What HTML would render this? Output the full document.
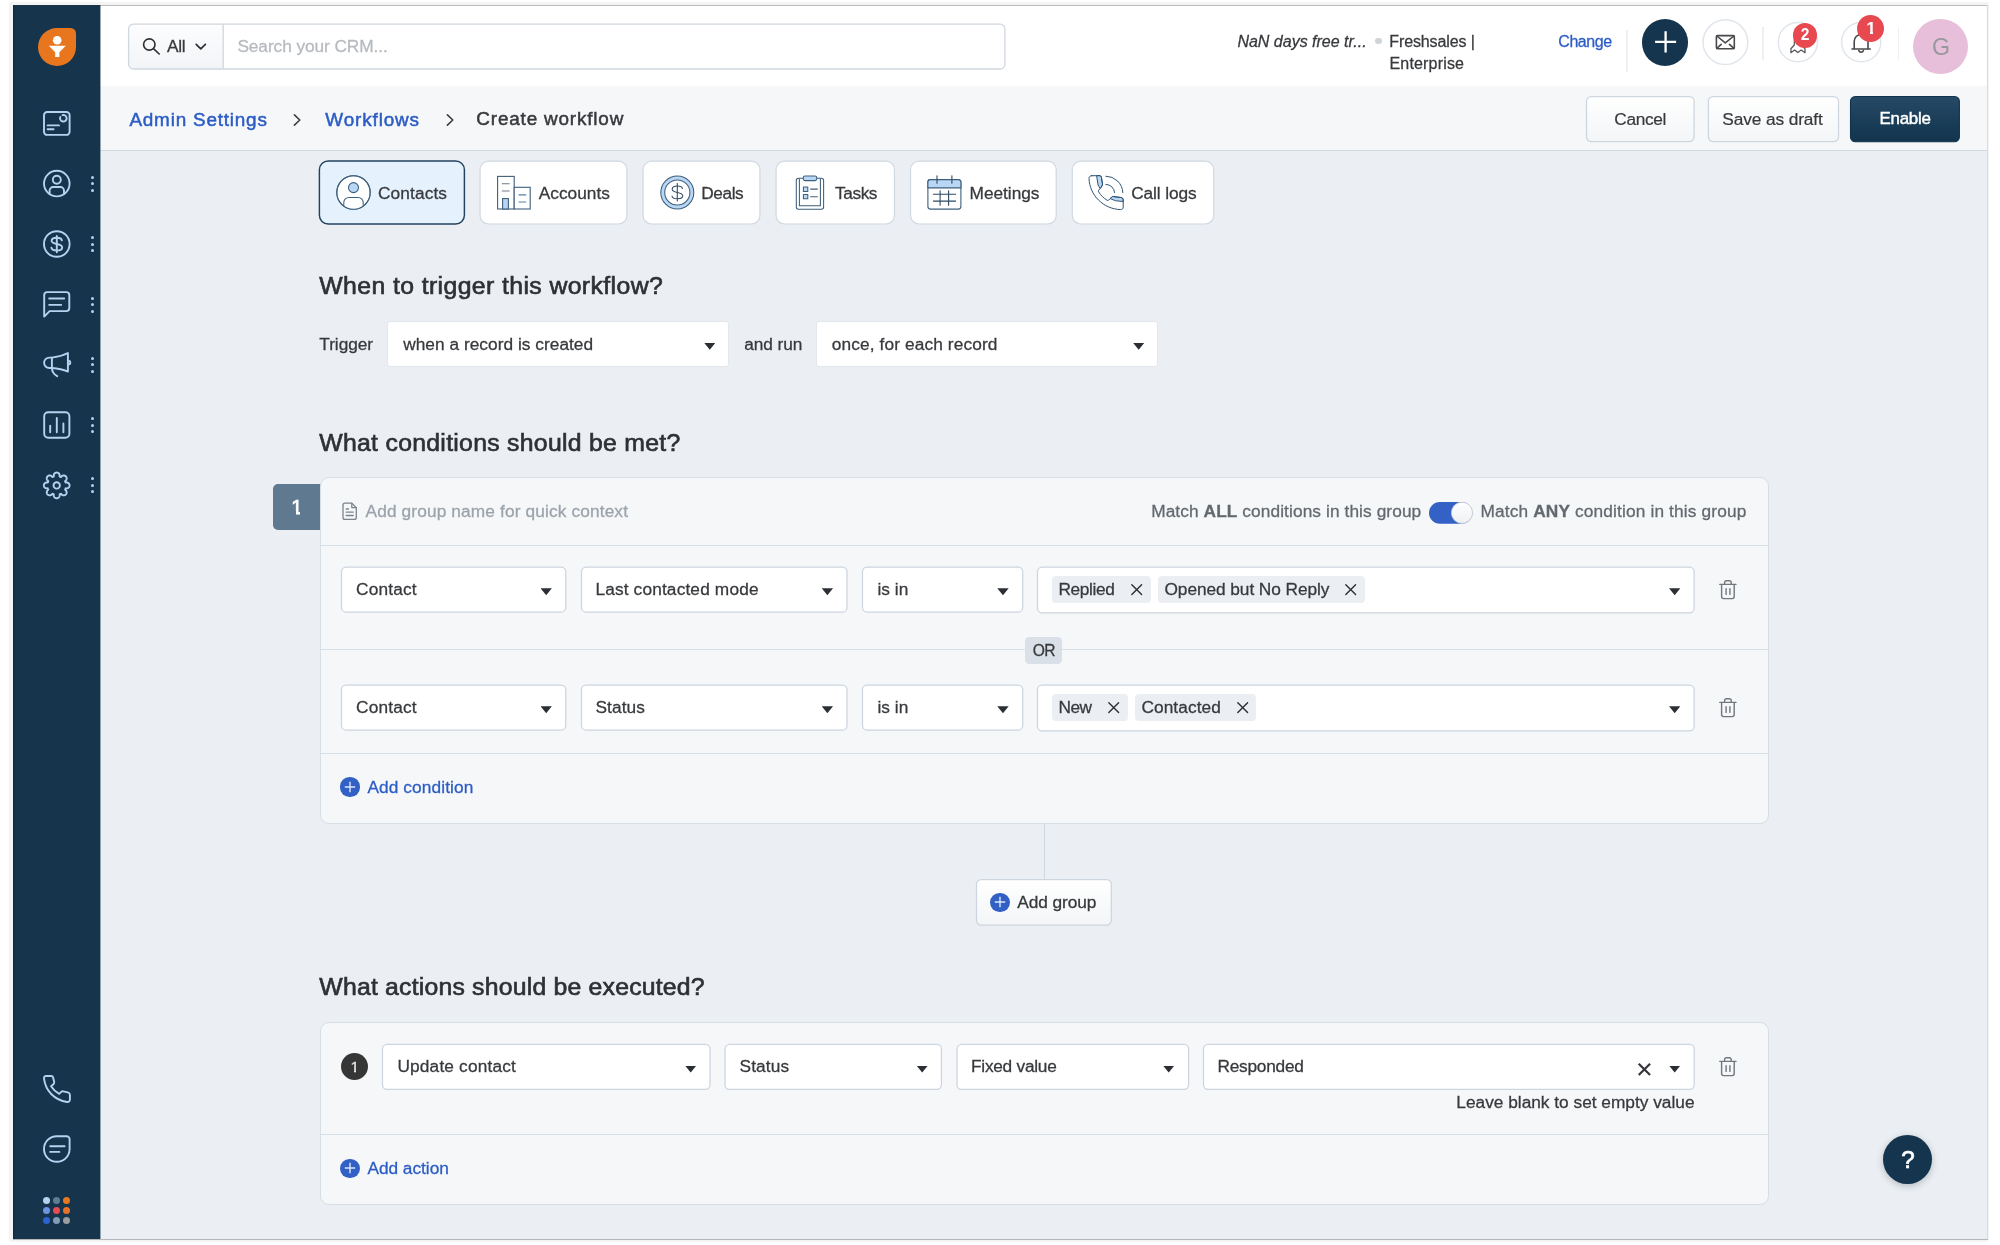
<!DOCTYPE html>
<html lang="en">
<head>
<meta charset="utf-8">
<title>Create workflow</title>
<style>
*{box-sizing:border-box;margin:0;padding:0}
html,body{width:2000px;height:1245px;background:#fff;overflow:hidden}
body{position:relative;font-family:"Liberation Sans",sans-serif;font-size:17.3px;color:#37393c;line-height:1}
.a{position:absolute}
.t{position:absolute;white-space:nowrap;line-height:20px;height:20px;margin-top:-0.7px;-webkit-text-stroke:0.28px currentColor}
.m{-webkit-text-stroke:0.5px currentColor}
#frame{left:13px;top:5px;width:1974.2px;height:1234px;background:#ebeff3;overflow:hidden}
#halo{left:9px;top:2px;width:1980.4px;height:1240.4px;background:#f4f4f4;border-radius:3px;box-shadow:0 0 1px 0 #f6f6f6}
#side{left:13px;top:5px;width:87px;height:1234px;background:#16344c;box-shadow:inset 1.3px 0 0 #0d2b45}
#top{left:100px;top:5px;width:1887px;height:81.3px;background:#fff;border-top:1px solid #bcbcbc}
#sub{left:100px;top:86.3px;width:1887px;height:64.7px;background:#f5f7f9;border-bottom:1px solid #d1d9e1}
.blue{color:#2c5cc5}
.sel{position:absolute;background:#fff;border:1px solid #d3dae2;border-radius:5px;height:46px;box-shadow:0 0 0 .5px rgba(203,212,222,.5),inset 0 0 0 .5px rgba(203,212,222,.4)}
.sel0{position:absolute;background:#fff;border:0.9px solid #e2e7ec;border-radius:3px;height:45.8px;margin:-0.65px 0 0 -0.9px}
.car{position:absolute;width:11.4px;height:7px;background:#2b2f33;clip-path:polygon(0 0,100% 0,50% 100%)}
.card{position:absolute;background:#f5f7f9;border:1px solid #d6dee6;border-radius:9px}
.hr{position:absolute;height:1.2px;background:#d6dee6}
.tag{position:absolute;background:#ebeff3;border-radius:4px;height:26.6px}
.btn{position:absolute;border:1px solid #d1d9e1;box-shadow:0 0 0 .5px rgba(203,212,222,.55);border-radius:5px;background:linear-gradient(#fff,#f3f5f7)}
.tab{position:absolute;top:160.5px;height:64px;background:#fff;border:1px solid #dde3ea;border-radius:9px;box-shadow:0 0 0 .5px rgba(215,222,230,.6)}
.circ{position:absolute;border-radius:50%}
svg{position:absolute;overflow:visible}
</style>
</head>
<body>
<div id="w" style="position:absolute;left:0;top:0;width:2000px;height:1245px;will-change:transform">
<svg width="0" height="0" style="left:0;top:0"><defs><linearGradient id="gw" x1="0" y1="0" x2="0" y2="1"><stop offset="0" stop-color="#fff"/><stop offset="1" stop-color="#f3f5f7"/></linearGradient><linearGradient id="gd" x1="0" y1="0" x2="0" y2="1"><stop offset="0" stop-color="#264966"/><stop offset="1" stop-color="#12344d"/></linearGradient></defs></svg>
<div class="a" id="halo"></div>
<div class="a" id="frame"></div>
<div class="a" id="side"></div>
<div class="a" id="top"></div>
<div class="a" id="sub"></div>
<div class="a" style="left:100px;top:5px;width:1px;height:1234px;background:rgba(22,52,76,.42)"></div>
<div class="a" style="left:1987px;top:5px;width:1px;height:1234px;background:#dadbdd"></div>
<div class="a" style="left:12.8px;top:1239px;width:1975.2px;height:1px;background:#b5b6b9"></div>

<!--SIDEBAR-->
<svg style="left:38px;top:28px" width="38" height="38" viewBox="0 0 38 38"><path d="M19 0H32.5A5.5 5.5 0 0 1 38 5.5V19A19 19 0 1 1 19 0Z" fill="#e8761f"/><circle cx="19.2" cy="12.2" r="4.3" fill="#fff"/><path d="M10.8 17.8H27.8L21.4 24.2V29H17.2V24.2Z" fill="#fff"/></svg>
<svg style="left:42px;top:110px" width="30" height="28" viewBox="42 110 30 28" fill="none" stroke="#b7d2f1" stroke-width="1.9" stroke-linecap="round" stroke-linejoin="round"><rect x="44" y="112" width="25.6" height="22.9" rx="3.2"/><path d="M47.6 125.4H59M47.6 129.3H53.6"/><path d="M60.3 117A3.3 3.3 0 1 0 62.4 115.1"/></svg>
<svg style="left:42px;top:169px" width="30" height="30" viewBox="42 169 30 30" fill="none" stroke="#b7d2f1" stroke-width="1.9" stroke-linecap="round" stroke-linejoin="round"><circle cx="56.8" cy="183.6" r="12.8"/><circle cx="56.8" cy="179.8" r="4"/><path d="M49.6 194V190.6A3.6 3.6 0 0 1 53.2 187H60.4A3.6 3.6 0 0 1 64 190.6V194"/></svg>
<div class="a" style="left:90.8px;top:175.8px;width:3px;height:3px;border-radius:50%;background:#b7d2f1"></div><div class="a" style="left:90.8px;top:182.3px;width:3px;height:3px;border-radius:50%;background:#b7d2f1"></div><div class="a" style="left:90.8px;top:188.8px;width:3px;height:3px;border-radius:50%;background:#b7d2f1"></div><svg style="left:42px;top:229px" width="30" height="30" viewBox="42 229 30 30" fill="none" stroke="#b7d2f1" stroke-width="1.9" stroke-linecap="round" stroke-linejoin="round"><circle cx="56.8" cy="244" r="12.8"/><path d="M56.8 236V252.2"/><path d="M61.8 240.4C61.8 238.6 59.6 237.8 56.8 237.8C53.8 237.8 51.6 238.8 51.6 240.8C51.6 245.2 62.2 242.8 62.2 247.4C62.2 249.4 59.8 250.4 56.8 250.4C53.8 250.4 51.6 249.4 51.4 247.6"/></svg>
<div class="a" style="left:90.8px;top:236.1px;width:3px;height:3px;border-radius:50%;background:#b7d2f1"></div><div class="a" style="left:90.8px;top:242.6px;width:3px;height:3px;border-radius:50%;background:#b7d2f1"></div><div class="a" style="left:90.8px;top:249.1px;width:3px;height:3px;border-radius:50%;background:#b7d2f1"></div><svg style="left:42px;top:289px" width="30" height="31" viewBox="42 289 30 31" fill="none" stroke="#b7d2f1" stroke-width="1.9" stroke-linecap="round" stroke-linejoin="round"><path d="M47.2 292.1H66.3A3 3 0 0 1 69.3 295.1V308.1A3 3 0 0 1 66.3 311.1H49.6L44.2 316.6V295.1A3 3 0 0 1 47.2 292.1Z"/><path d="M49.2 298.5H64.2M49.2 304.9H61.2"/></svg>
<div class="a" style="left:90.8px;top:296.5px;width:3px;height:3px;border-radius:50%;background:#b7d2f1"></div><div class="a" style="left:90.8px;top:303.0px;width:3px;height:3px;border-radius:50%;background:#b7d2f1"></div><div class="a" style="left:90.8px;top:309.5px;width:3px;height:3px;border-radius:50%;background:#b7d2f1"></div><svg style="left:42px;top:350px" width="31" height="29" viewBox="42 350 31 29" fill="none" stroke="#b7d2f1" stroke-width="1.9" stroke-linecap="round" stroke-linejoin="round"><path d="M51.9 357.6H49.3A5.2 5.2 0 0 0 49.3 368H51.9Z"/><path d="M51.9 357.6C58 357 63 355.6 67.9 353V371.6C63 369.4 58 368.4 51.9 368"/><path d="M68.4 360.6A1.9 1.9 0 0 1 68.4 364.4"/><path d="M51.9 368C52 372 54 374.4 57.2 376.2"/></svg>
<div class="a" style="left:90.8px;top:356.8px;width:3px;height:3px;border-radius:50%;background:#b7d2f1"></div><div class="a" style="left:90.8px;top:363.3px;width:3px;height:3px;border-radius:50%;background:#b7d2f1"></div><div class="a" style="left:90.8px;top:369.8px;width:3px;height:3px;border-radius:50%;background:#b7d2f1"></div><svg style="left:42px;top:410px" width="30" height="30" viewBox="42 410 30 30" fill="none" stroke="#b7d2f1" stroke-width="1.9" stroke-linecap="round" stroke-linejoin="round"><rect x="44.2" y="412.3" width="25.2" height="25.4" rx="4"/><path d="M50.2 425.6V432.2M56.8 418V432.2M63.4 423.4V432.2"/></svg>
<div class="a" style="left:90.8px;top:417.1px;width:3px;height:3px;border-radius:50%;background:#b7d2f1"></div><div class="a" style="left:90.8px;top:423.6px;width:3px;height:3px;border-radius:50%;background:#b7d2f1"></div><div class="a" style="left:90.8px;top:430.1px;width:3px;height:3px;border-radius:50%;background:#b7d2f1"></div><svg style="left:42px;top:471px" width="30" height="30" viewBox="-15 -15 30 30" fill="none" stroke="#b7d2f1" stroke-width="1.9" stroke-linejoin="round"><g transform="translate(-0.3,-0.6)"><path d="M12.85 0.00 L12.84 0.22 L12.82 0.45 L12.77 0.67 L12.71 0.89 L12.64 1.11 L12.54 1.32 L12.42 1.53 L12.29 1.73 L12.14 1.92 L11.96 2.11 L11.76 2.29 L11.54 2.45 L11.28 2.61 L10.99 2.74 L10.65 2.85 L10.23 2.93 L9.60 2.93 L8.89 2.89 L8.84 3.04 L8.79 3.20 L8.73 3.35 L8.67 3.50 L8.61 3.65 L8.54 3.80 L8.47 3.95 L8.40 4.10 L8.33 4.24 L8.86 4.71 L9.30 5.16 L9.55 5.51 L9.71 5.83 L9.82 6.14 L9.89 6.43 L9.94 6.70 L9.95 6.97 L9.94 7.22 L9.91 7.47 L9.86 7.71 L9.80 7.93 L9.72 8.15 L9.62 8.36 L9.51 8.56 L9.38 8.75 L9.24 8.92 L9.09 9.09 L8.92 9.24 L8.75 9.38 L8.56 9.51 L8.36 9.62 L8.15 9.72 L7.93 9.80 L7.71 9.86 L7.47 9.91 L7.22 9.94 L6.97 9.95 L6.70 9.94 L6.43 9.89 L6.14 9.82 L5.83 9.71 L5.51 9.55 L5.16 9.30 L4.71 8.86 L4.24 8.33 L4.10 8.40 L3.95 8.47 L3.80 8.54 L3.65 8.61 L3.50 8.67 L3.35 8.73 L3.20 8.79 L3.04 8.84 L2.89 8.89 L2.93 9.60 L2.93 10.23 L2.85 10.65 L2.74 10.99 L2.61 11.28 L2.45 11.54 L2.29 11.76 L2.11 11.96 L1.92 12.14 L1.73 12.29 L1.53 12.42 L1.32 12.54 L1.11 12.64 L0.89 12.71 L0.67 12.77 L0.45 12.82 L0.22 12.84 L0.00 12.85 L-0.22 12.84 L-0.45 12.82 L-0.67 12.77 L-0.89 12.71 L-1.11 12.64 L-1.32 12.54 L-1.53 12.42 L-1.73 12.29 L-1.92 12.14 L-2.11 11.96 L-2.29 11.76 L-2.45 11.54 L-2.61 11.28 L-2.74 10.99 L-2.85 10.65 L-2.93 10.23 L-2.93 9.60 L-2.89 8.89 L-3.04 8.84 L-3.20 8.79 L-3.35 8.73 L-3.50 8.67 L-3.65 8.61 L-3.80 8.54 L-3.95 8.47 L-4.10 8.40 L-4.24 8.33 L-4.71 8.86 L-5.16 9.30 L-5.51 9.55 L-5.83 9.71 L-6.14 9.82 L-6.43 9.89 L-6.70 9.94 L-6.97 9.95 L-7.22 9.94 L-7.47 9.91 L-7.71 9.86 L-7.93 9.80 L-8.15 9.72 L-8.36 9.62 L-8.56 9.51 L-8.75 9.38 L-8.92 9.24 L-9.09 9.09 L-9.24 8.92 L-9.38 8.75 L-9.51 8.56 L-9.62 8.36 L-9.72 8.15 L-9.80 7.93 L-9.86 7.71 L-9.91 7.47 L-9.94 7.22 L-9.95 6.97 L-9.94 6.70 L-9.89 6.43 L-9.82 6.14 L-9.71 5.83 L-9.55 5.51 L-9.30 5.16 L-8.86 4.71 L-8.33 4.24 L-8.40 4.10 L-8.47 3.95 L-8.54 3.80 L-8.61 3.65 L-8.67 3.50 L-8.73 3.35 L-8.79 3.20 L-8.84 3.04 L-8.89 2.89 L-9.60 2.93 L-10.23 2.93 L-10.65 2.85 L-10.99 2.74 L-11.28 2.61 L-11.54 2.45 L-11.76 2.29 L-11.96 2.11 L-12.14 1.92 L-12.29 1.73 L-12.42 1.53 L-12.54 1.32 L-12.64 1.11 L-12.71 0.89 L-12.77 0.67 L-12.82 0.45 L-12.84 0.22 L-12.85 0.00 L-12.84 -0.22 L-12.82 -0.45 L-12.77 -0.67 L-12.71 -0.89 L-12.64 -1.11 L-12.54 -1.32 L-12.42 -1.53 L-12.29 -1.73 L-12.14 -1.92 L-11.96 -2.11 L-11.76 -2.29 L-11.54 -2.45 L-11.28 -2.61 L-10.99 -2.74 L-10.65 -2.85 L-10.23 -2.93 L-9.60 -2.93 L-8.89 -2.89 L-8.84 -3.04 L-8.79 -3.20 L-8.73 -3.35 L-8.67 -3.50 L-8.61 -3.65 L-8.54 -3.80 L-8.47 -3.95 L-8.40 -4.10 L-8.33 -4.24 L-8.86 -4.71 L-9.30 -5.16 L-9.55 -5.51 L-9.71 -5.83 L-9.82 -6.14 L-9.89 -6.43 L-9.94 -6.70 L-9.95 -6.97 L-9.94 -7.22 L-9.91 -7.47 L-9.86 -7.71 L-9.80 -7.93 L-9.72 -8.15 L-9.62 -8.36 L-9.51 -8.56 L-9.38 -8.75 L-9.24 -8.92 L-9.09 -9.09 L-8.92 -9.24 L-8.75 -9.38 L-8.56 -9.51 L-8.36 -9.62 L-8.15 -9.72 L-7.93 -9.80 L-7.71 -9.86 L-7.47 -9.91 L-7.22 -9.94 L-6.97 -9.95 L-6.70 -9.94 L-6.43 -9.89 L-6.14 -9.82 L-5.83 -9.71 L-5.51 -9.55 L-5.16 -9.30 L-4.71 -8.86 L-4.24 -8.33 L-4.10 -8.40 L-3.95 -8.47 L-3.80 -8.54 L-3.65 -8.61 L-3.50 -8.67 L-3.35 -8.73 L-3.20 -8.79 L-3.04 -8.84 L-2.89 -8.89 L-2.93 -9.60 L-2.93 -10.23 L-2.85 -10.65 L-2.74 -10.99 L-2.61 -11.28 L-2.45 -11.54 L-2.29 -11.76 L-2.11 -11.96 L-1.92 -12.14 L-1.73 -12.29 L-1.53 -12.42 L-1.32 -12.54 L-1.11 -12.64 L-0.89 -12.71 L-0.67 -12.77 L-0.45 -12.82 L-0.22 -12.84 L-0.00 -12.85 L0.22 -12.84 L0.45 -12.82 L0.67 -12.77 L0.89 -12.71 L1.11 -12.64 L1.32 -12.54 L1.53 -12.42 L1.73 -12.29 L1.92 -12.14 L2.11 -11.96 L2.29 -11.76 L2.45 -11.54 L2.61 -11.28 L2.74 -10.99 L2.85 -10.65 L2.93 -10.23 L2.93 -9.60 L2.89 -8.89 L3.04 -8.84 L3.20 -8.79 L3.35 -8.73 L3.50 -8.67 L3.65 -8.61 L3.80 -8.54 L3.95 -8.47 L4.10 -8.40 L4.24 -8.33 L4.71 -8.86 L5.16 -9.30 L5.51 -9.55 L5.83 -9.71 L6.14 -9.82 L6.43 -9.89 L6.70 -9.94 L6.97 -9.95 L7.22 -9.94 L7.47 -9.91 L7.71 -9.86 L7.93 -9.80 L8.15 -9.72 L8.36 -9.62 L8.56 -9.51 L8.75 -9.38 L8.92 -9.24 L9.09 -9.09 L9.24 -8.92 L9.38 -8.75 L9.51 -8.56 L9.62 -8.36 L9.72 -8.15 L9.80 -7.93 L9.86 -7.71 L9.91 -7.47 L9.94 -7.22 L9.95 -6.97 L9.94 -6.70 L9.89 -6.43 L9.82 -6.14 L9.71 -5.83 L9.55 -5.51 L9.30 -5.16 L8.86 -4.71 L8.33 -4.24 L8.40 -4.10 L8.47 -3.95 L8.54 -3.80 L8.61 -3.65 L8.67 -3.50 L8.73 -3.35 L8.79 -3.20 L8.84 -3.04 L8.89 -2.89 L9.60 -2.93 L10.23 -2.93 L10.65 -2.85 L10.99 -2.74 L11.28 -2.61 L11.54 -2.45 L11.76 -2.29 L11.96 -2.11 L12.14 -1.92 L12.29 -1.73 L12.42 -1.53 L12.54 -1.32 L12.64 -1.11 L12.71 -0.89 L12.77 -0.67 L12.82 -0.45 L12.84 -0.22Z"/><circle r="3.2"/></g></svg>
<div class="a" style="left:90.8px;top:477.4px;width:3px;height:3px;border-radius:50%;background:#b7d2f1"></div><div class="a" style="left:90.8px;top:483.9px;width:3px;height:3px;border-radius:50%;background:#b7d2f1"></div><div class="a" style="left:90.8px;top:490.4px;width:3px;height:3px;border-radius:50%;background:#b7d2f1"></div><svg style="left:43.1px;top:1074.9px" width="28" height="28" viewBox="0 0 28 28" fill="none" stroke="#b7d2f1" stroke-width="1.9" stroke-linecap="round" stroke-linejoin="round"><path d="M3.2 1H8.2C9.4 1 9.9 1.6 10.1 2.6L11.2 7C11.4 8 11.1 8.6 10.4 9.2L8.1 11.2C10.2 14.6 12.8 17 16.2 18.9L18.2 16.9C18.8 16.3 19.4 16.1 20.2 16.3L24.8 17.4C26.2 17.8 26.9 18.4 26.9 19.8V24.6C26.9 26.2 25.6 27.3 24 27C11.6 25.2 2.6 16 1 3.6C0.8 2 1.8 1 3.2 1Z"/></svg>
<svg style="left:42px;top:1134px" width="30" height="30" viewBox="42 1134 30 30" fill="none" stroke="#b7d2f1" stroke-width="1.9" stroke-linecap="round" stroke-linejoin="round"><path d="M56.8 1136.2H66.6A3 3 0 0 1 69.6 1139.2V1149A12.8 12.8 0 1 1 56.8 1136.2Z"/><path d="M50.2 1146.2H64.6M50.2 1151.9H59.4"/></svg>
<div class="a" style="left:43.0px;top:1197.0px;width:7.2px;height:7.2px;border-radius:50%;background:#b7d2f1"></div><div class="a" style="left:53.1px;top:1197.0px;width:7.2px;height:7.2px;border-radius:50%;background:#5f7d93"></div><div class="a" style="left:63.1px;top:1197.0px;width:7.2px;height:7.2px;border-radius:50%;background:#e8781f"></div><div class="a" style="left:43.0px;top:1207.2px;width:7.2px;height:7.2px;border-radius:50%;background:#6f93e0"></div><div class="a" style="left:53.1px;top:1207.2px;width:7.2px;height:7.2px;border-radius:50%;background:#e84c50"></div><div class="a" style="left:63.1px;top:1207.2px;width:7.2px;height:7.2px;border-radius:50%;background:#ea7226"></div><div class="a" style="left:43.0px;top:1217.3px;width:7.2px;height:7.2px;border-radius:50%;background:#2e62d1"></div><div class="a" style="left:53.1px;top:1217.3px;width:7.2px;height:7.2px;border-radius:50%;background:#7f9cb9"></div><div class="a" style="left:63.1px;top:1217.3px;width:7.2px;height:7.2px;border-radius:50%;background:#9b9c9e"></div>
<!--TOPBAR-->
<svg style="left:125px;top:21px" width="884" height="52" viewBox="125 21 884 52"><defs><linearGradient id="gs" x1="0" y1="0" x2="0" y2="1"><stop offset="0" stop-color="#fdfdfe"/><stop offset="1" stop-color="#f2f4f7"/></linearGradient></defs><rect x="128.6" y="24.15" width="876.3" height="44.85" rx="4.8" fill="#fff"/><path d="M223.2 24.15H133.4A4.8 4.8 0 0 0 128.6 28.95V64.2A4.8 4.8 0 0 0 133.4 69H223.2Z" fill="url(#gs)"/><path d="M223.2 24.15V69" stroke="#cfd7df" stroke-width="1.3"/><rect x="128.6" y="24.15" width="876.3" height="44.85" rx="4.8" fill="none" stroke="#cfd7df" stroke-width="1.3"/></svg>
<svg style="left:141px;top:36px" width="22" height="21" viewBox="141 36 22 21" fill="none" stroke="#2f3235" stroke-width="1.65" stroke-linecap="round"><circle cx="149.3" cy="44.5" r="5.7"/><path d="M153.5 48.7L159.2 54"/></svg>
<span class="t" style="left:167px;top:36.5px;letter-spacing:-0.3px">All</span>
<svg style="left:194px;top:42px" width="14" height="10" viewBox="194 42 14 10" fill="none" stroke="#2b2f33" stroke-width="1.7" stroke-linecap="round" stroke-linejoin="round"><path d="M196.2 44.4L200.8 48.8L205.4 44.4"/></svg>
<span class="t" style="left:237.4px;top:36.5px;letter-spacing:-0.08px;color:#b6babf">Search your CRM...</span>

<span class="t" style="left:1237.4px;top:32.2px;font-size:16px;font-style:italic;letter-spacing:0.0px">NaN days free tr...</span>
<div class="circ" style="left:1375.4px;top:38px;width:6.4px;height:6.4px;background:#cfd4d9"></div>
<span class="t" style="left:1389.3px;top:32.2px;font-size:16px;letter-spacing:-0.12px">Freshsales |</span>
<span class="t" style="left:1389.5px;top:54.2px;font-size:16px;letter-spacing:0.17px">Enterprise</span>
<span class="t blue" style="left:1558.3px;top:32.2px;font-size:16px;letter-spacing:-0.45px">Change</span>
<div class="a" style="left:1626.3px;top:30px;width:1.6px;height:42.4px;background:#eceff3"></div>
<div class="circ" style="left:1641.6px;top:19.1px;width:46.6px;height:46.6px;background:#15354e"></div>
<svg style="left:1652px;top:30px" width="26" height="26" viewBox="1652 30 26 26" stroke="#fff" stroke-width="2.3" stroke-linecap="butt"><path d="M1655.1 41.9H1676.1M1665.6 31.3V52.4"/></svg>
<svg style="left:1700px;top:17px" width="51" height="51" viewBox="1700 17 51 51"><circle cx="1725.40" cy="42.20" r="22.40" fill="#fff" stroke="#e0e6ec" stroke-width="1.5"/></svg>
<svg style="left:1714px;top:33px" width="23" height="18" viewBox="1714 33 23 18" fill="none" stroke="#47494c" stroke-width="1.6" stroke-linejoin="round" stroke-linecap="round"><rect x="1716.4" y="35.6" width="17.9" height="13.2" rx="1.2"/><path d="M1716.8 36L1725.3 42.9L1733.9 36M1716.8 48.4L1721.2 44.4M1733.9 48.4L1729.5 44.4"/></svg>
<div class="a" style="left:1762.2px;top:27.4px;width:1.6px;height:33px;background:#eceff3"></div>
<svg style="left:1775px;top:20px" width="46" height="46" viewBox="1775 20 46 46"><circle cx="1797.90" cy="42.20" r="19.60" fill="#fff" stroke="#e0e6ec" stroke-width="1.5"/></svg>
<svg style="left:1788px;top:30px" width="22" height="25" viewBox="1788 30 22 25" fill="none" stroke="#5a5c5f" stroke-width="1.3" stroke-linejoin="round" stroke-linecap="round"><path d="M1798 31C1794.5 34.5 1794 40 1794.3 45L1790.9 48.8V52.7L1794.6 49.9L1797.9 52.6L1801.2 49.9L1805 52.7V48.8L1801.6 45C1801.9 40 1801.4 34.5 1798 31Z"/></svg>
<div class="circ" style="left:1792.8px;top:23.2px;width:24.6px;height:24.6px;background:#e8484f"></div>
<span class="t" style="left:1792.7px;top:25.9px;width:24.6px;text-align:center;color:#fff;font-weight:700;font-size:15.6px;-webkit-text-stroke:0">2</span>
<svg style="left:1839px;top:20px" width="46" height="46" viewBox="1839 20 46 46"><circle cx="1861.20" cy="42.20" r="19.60" fill="#fff" stroke="#e0e6ec" stroke-width="1.5"/></svg>
<svg style="left:1850px;top:32px" width="22" height="24" viewBox="1850 32 22 24" fill="none" stroke="#47494c" stroke-width="1.6" stroke-linejoin="round" stroke-linecap="round"><path d="M1852 49H1870.2M1854.2 49V41.4A6.9 6.9 0 0 1 1868 41.4V49"/><path d="M1858.8 50.6A2.4 2.4 0 0 0 1863.4 50.6"/></svg>
<div class="circ" style="left:1856.9px;top:14.8px;width:27.3px;height:27.3px;background:#e8484f"></div>
<span class="t" style="left:1857.3px;top:18.6px;width:27.3px;text-align:center;color:#fff;font-weight:700;font-size:17.3px;-webkit-text-stroke:0">1</span><div class="a" style="left:1865.6px;top:31.4px;width:4.2px;height:3.4px;background:#e8484f"></div><div class="a" style="left:1873.4px;top:31.4px;width:3.6px;height:3.4px;background:#e8484f"></div>
<div class="a" style="left:1897.7px;top:27.4px;width:1.6px;height:33px;background:#eceff3"></div>
<div class="circ" style="left:1913px;top:19px;width:55px;height:55px;background:#e7bfda"></div>
<span class="t" style="left:1913.6px;top:35.6px;width:55px;text-align:center;color:#97989b;font-size:23.2px;line-height:24px;height:24px;-webkit-text-stroke:0">G</span>
<!--SUBHEADER-->
<span class="t blue m" style="left:129.4px;top:109.6px;font-size:18.9px;line-height:22px;letter-spacing:0.8px">Admin Settings</span>
<svg style="left:290px;top:110px" width="14" height="20" viewBox="290 110 14 20" fill="none" stroke="#3a3f44" stroke-width="1.6" stroke-linecap="round" stroke-linejoin="round"><path d="M294.4 114.8L299.8 120L294.4 125.2"/></svg>
<span class="t blue m" style="left:325.3px;top:109.6px;font-size:18.9px;line-height:22px;letter-spacing:0.87px">Workflows</span>
<svg style="left:443px;top:110px" width="14" height="20" viewBox="443 110 14 20" fill="none" stroke="#3a3f44" stroke-width="1.6" stroke-linecap="round" stroke-linejoin="round"><path d="M447.4 114.8L452.8 120L447.4 125.2"/></svg>
<span class="t m" style="left:476.3px;top:108.6px;font-size:18.9px;line-height:22px;letter-spacing:0.83px">Create workflow</span>
<svg style="left:1583px;top:93px" width="115" height="52" viewBox="1583 93 115 52"><rect x="1586.50" y="96.50" width="107.60" height="45.20" rx="4.8" fill="url(#gw)" stroke="#cdd5de" stroke-width="1.25"/></svg>
<span class="t" style="left:1614.3px;top:109.8px;letter-spacing:-0.36px;-webkit-text-stroke:0.2px currentColor">Cancel</span>
<svg style="left:1705px;top:93px" width="137" height="52" viewBox="1705 93 137 52"><rect x="1708.40" y="96.50" width="130.10" height="45.20" rx="4.8" fill="url(#gw)" stroke="#cdd5de" stroke-width="1.25"/></svg>
<span class="t" style="left:1722.3px;top:109.8px;letter-spacing:-0.11px;-webkit-text-stroke:0.2px currentColor">Save as draft</span>
<svg style="left:1847px;top:93px" width="116" height="52" viewBox="1847 93 116 52"><rect x="1850.50" y="96.50" width="108.90" height="45.20" rx="4.8" fill="url(#gd)" stroke="#12344d" stroke-width="1.1"/></svg>
<span class="t" style="left:1879.6px;top:109.8px;font-size:16.9px;letter-spacing:-0.28px;color:#fff;-webkit-text-stroke:0.45px #fff">Enable</span>
<!--TABS-->
<svg style="left:316px;top:158px" width="152" height="69" viewBox="316 158 152 69"><rect x="319.40" y="161.00" width="145.00" height="63.00" rx="8.8" fill="#e5f2fd" stroke="#22425f" stroke-width="1.45"/></svg>
<svg style="left:335px;top:174px" width="37" height="37" viewBox="335 174 37 37" fill="none" stroke="#3e5f7c" stroke-width="1.05"><defs><clipPath id="cc"><circle cx="353.5" cy="192.5" r="16.7"/></clipPath></defs><circle cx="353.5" cy="192.5" r="16.7" fill="#fff"/><circle cx="353.5" cy="187.6" r="5" fill="#b9d6f5"/><path clip-path="url(#cc)" d="M343.8 212V202.6A5.2 5.2 0 0 1 349 197.4H358A5.2 5.2 0 0 1 363.2 202.6V212" fill="#fff"/><circle cx="353.5" cy="192.5" r="16.7"/></svg>
<span class="t" style="left:378px;top:183.5px;letter-spacing:0.11px">Contacts</span>

<svg style="left:477px;top:158px" width="153" height="69" viewBox="477 158 153 69"><rect x="480.05" y="161.15" width="146.90" height="62.85" rx="8.6" fill="#fff" stroke="#d0d8e1" stroke-width="1.2"/></svg>
<svg style="left:495px;top:174px" width="38" height="37" viewBox="495 174 38 37" fill="none" stroke="#3e5f7c" stroke-width="1.1" stroke-linejoin="miter"><rect x="497.6" y="176.4" width="16.6" height="32.6" fill="#fff"/><rect x="514.2" y="187.3" width="16" height="21.7" fill="#fff"/><rect x="502.6" y="198.6" width="5.8" height="10.4" fill="#b9d6f5"/><path d="M501.8 183.7H509.6M501.8 191H509.6" stroke="#6f7d8a"/><path d="M518.6 194.9H526.2M518.6 202H526.2" stroke="#5b7fa6"/></svg>
<span class="t" style="left:538.7px;top:183.5px;letter-spacing:0.02px">Accounts</span>

<svg style="left:640px;top:158px" width="123" height="69" viewBox="640 158 123 69"><rect x="643.05" y="161.15" width="116.90" height="62.85" rx="8.6" fill="#fff" stroke="#d0d8e1" stroke-width="1.2"/></svg>
<svg style="left:659px;top:174px" width="37" height="37" viewBox="659 174 37 37" fill="none" stroke="#3e5f7c" stroke-width="1.05" stroke-linecap="round"><circle cx="677.3" cy="192.5" r="16.5" fill="#b9d6f5"/><circle cx="677.3" cy="192.5" r="12.6" fill="#fff"/><path d="M677.3 183.6V201" stroke="#2f4a63"/><path d="M682.4 188.6C682.2 186.8 680.2 186 677.4 186C674.4 186 672.2 187.2 672.2 189.2C672.2 193.6 682.8 191.2 682.8 195.8C682.8 197.8 680.4 198.8 677.4 198.8C674.4 198.8 672.2 197.8 672 196" stroke="#2f4a63"/></svg>
<span class="t" style="left:701.2px;top:183.5px;letter-spacing:-0.42px">Deals</span>

<svg style="left:773px;top:158px" width="125" height="69" viewBox="773 158 125 69"><rect x="776.05" y="161.15" width="118.40" height="62.85" rx="8.6" fill="#fff" stroke="#d0d8e1" stroke-width="1.2"/></svg>
<svg style="left:794px;top:174px" width="32" height="37" viewBox="794 174 32 37" fill="none" stroke="#3e5f7c" stroke-width="1.05" stroke-linejoin="round"><rect x="796.3" y="178.2" width="27.3" height="31" rx="2.2" fill="#fff"/><path d="M799.4 178.4V205.8H820.4V178.4"/><rect x="803.2" y="176" width="13.6" height="4.6" rx="1.8" fill="#b9d6f5"/><rect x="803.4" y="187" width="4.4" height="4.4" fill="#b9d6f5"/><rect x="803.4" y="194.4" width="4.4" height="4.4" fill="#b9d6f5"/><path d="M810.2 189.1H817.8M810.2 196.7H817.8"/></svg>
<span class="t" style="left:835px;top:183.5px;letter-spacing:-0.42px">Tasks</span>

<svg style="left:907px;top:158px" width="153" height="69" viewBox="907 158 153 69"><rect x="910.55" y="161.15" width="145.65" height="62.85" rx="8.6" fill="#fff" stroke="#d0d8e1" stroke-width="1.2"/></svg>
<svg style="left:926px;top:174px" width="37" height="37" viewBox="926 174 37 37" fill="none" stroke="#3e5f7c" stroke-width="1.1" stroke-linecap="round"><rect x="927.9" y="179.6" width="33" height="29.5" rx="2.6" fill="#fff"/><path d="M927.9 187.9V182.2A2.6 2.6 0 0 1 930.5 179.6H958.3A2.6 2.6 0 0 1 960.9 182.2V187.9Z" fill="#b9d6f5"/><path d="M937 175.8V183.2M951.9 175.8V183.2" stroke="#2f4a63"/><path d="M933.4 194.2H955.6M933.4 201.1H955.6M940.1 190.7V205.3M948.6 190.7V205.3" stroke="#2f4a63"/></svg>
<span class="t" style="left:969.5px;top:183.5px;letter-spacing:-0.02px">Meetings</span>

<svg style="left:1069px;top:158px" width="148" height="69" viewBox="1069 158 148 69"><rect x="1072.30" y="161.15" width="141.40" height="62.85" rx="8.6" fill="#fff" stroke="#d0d8e1" stroke-width="1.2"/></svg>
<svg style="left:1087px;top:173px" width="39" height="39" viewBox="1087 173 39 39" fill="none" stroke="#2f5574" stroke-width="1" stroke-linecap="round" stroke-linejoin="round"><path d="M1097 175.7L1099 175.5C1100.6 175.5 1101.2 176.2 1101.4 177.4L1102.5 184C1102.6 185.2 1101.6 186.8 1100.2 188.4L1098.3 185.4Z" fill="#b9d6f5"/><path d="M1110.6 198.4C1111.4 197.2 1112 196.5 1113 196.5L1120.8 197.5C1122.4 197.8 1123.2 198.6 1123.2 199.8V201.5L1116 200.8Z" fill="#b9d6f5"/><path d="M1091.6 175.7H1099C1100.6 175.5 1101.2 176.2 1101.4 177.4L1102.5 184C1102.6 185.2 1101.6 186.8 1100.2 188.4L1098.6 190.4C1098.2 191 1098.3 191.4 1098.7 192C1101 195.6 1103.6 198 1107 200.2C1107.6 200.6 1108.2 200.5 1108.6 200.1L1110.6 198.4C1111.4 197.2 1112 196.5 1113 196.5L1120.8 197.5C1122.4 197.8 1123.2 198.6 1123.2 199.8V207.2C1123.2 208.8 1122.2 209.6 1120.6 209.6C1103.4 209 1089.6 195.4 1089 178.4C1089 176.8 1090 175.7 1091.6 175.7Z"/><path d="M1105.9 184.4A8.6 8.6 0 0 1 1114.6 192.6M1105.9 176.2A16.8 16.8 0 0 1 1122.8 192.6"/></svg>
<span class="t" style="left:1131.2px;top:183.5px;letter-spacing:-0.1px">Call logs</span>
<!--TRIGGER-->
<span class="t" style="left:319.3px;top:271.8px;font-size:24.8px;line-height:28px;height:28px;margin-top:0.4px;color:#2e3033;letter-spacing:0.39px;-webkit-text-stroke:0.65px currentColor">When to trigger this workflow?</span>
<span class="t" style="left:319.3px;top:334.7px;letter-spacing:-0.06px">Trigger</span>
<div class="sel0" style="left:388px;top:321.75px;width:342.2px"></div>
<span class="t" style="left:403.2px;top:334.7px;letter-spacing:0.03px">when a record is created</span>
<div class="car" style="left:704.1px;top:342.7px"></div>
<span class="t" style="left:744.2px;top:334.7px;letter-spacing:-0.06px">and run</span>
<div class="sel0" style="left:817px;top:321.75px;width:342.2px"></div>
<span class="t" style="left:831.7px;top:334.7px;letter-spacing:0.12px">once, for each record</span>
<div class="car" style="left:1133px;top:342.7px"></div>
<span class="t" style="left:319.3px;top:428.4px;font-size:24.8px;line-height:28px;height:28px;margin-top:0.4px;color:#2e3033;letter-spacing:0.28px;-webkit-text-stroke:0.65px currentColor">What conditions should be met?</span>
<!--CONDITIONS-->
<div class="a" style="left:273px;top:484px;width:50px;height:46.4px;background:#5f7991;border-radius:5px 0 0 5px"></div>
<span class="t" style="left:273.2px;top:496.5px;width:47px;text-align:center;color:#fff;font-weight:400;-webkit-text-stroke:0.75px #fff;font-size:20px;line-height:22px;height:22px">1</span><div class="a" style="left:290.8px;top:511.2px;width:4.9px;height:3.8px;background:#5f7991"></div><div class="a" style="left:299.9px;top:511.2px;width:3.4px;height:3.8px;background:#5f7991"></div>
<div class="card" style="left:319.6px;top:477.4px;width:1449.2px;height:346.2px"></div>
<svg style="left:341px;top:501px" width="18" height="21" viewBox="341 501 18 21" fill="none" stroke="#7b848c" stroke-width="1.3" stroke-linejoin="round" stroke-linecap="round"><path d="M345 503.1H351.8L356.3 507.6V517.4A2 2 0 0 1 354.3 519.4H345A2 2 0 0 1 343 517.4V505.1A2 2 0 0 1 345 503.1Z"/><path d="M351.8 503.3V507.6H356.1M346.2 509H348.4M346.2 512.2H353.2M346.2 515.5H353.2"/></svg>
<span class="t" style="left:365.5px;top:501.3px;letter-spacing:0.13px;color:#9ba3ab">Add group name for quick context</span>
<span class="t" style="left:1151.2px;top:501.3px;letter-spacing:0.09px;color:#63696f">Match <b>ALL</b> conditions in this group</span>
<svg style="left:1426px;top:499px" width="50" height="28" viewBox="1426 499 50 28"><defs><linearGradient id="kn" x1="0" y1="0" x2="0" y2="1"><stop offset="0" stop-color="#fff"/><stop offset="1" stop-color="#eef0f3"/></linearGradient></defs><rect x="1429" y="502" width="43.4" height="21.8" rx="10.9" fill="#3461c5"/><circle cx="1462" cy="512.8" r="10.6" fill="url(#kn)" stroke="#c6cacf" stroke-width="0.8"/></svg>
<span class="t" style="left:1480.5px;top:501.3px;letter-spacing:0.14px;color:#63696f">Match <b>ANY</b> condition in this group</span>
<div class="hr" style="left:320.6px;top:545px;width:1447.2px"></div>
<svg style="left:338px;top:564px" width="231" height="51" viewBox="338 564 231 51"><rect x="341.50" y="567.00" width="224.20" height="45.00" rx="4.6" fill="#fff" stroke="#cdd5de" stroke-width="1.25"/></svg><span class="t" style="left:356px;top:579.6px;letter-spacing:0.17px">Contact</span><div class="car" style="left:540.5px;top:588.3px"></div><svg style="left:578px;top:564px" width="272" height="51" viewBox="578 564 272 51"><rect x="581.50" y="567.00" width="265.50" height="45.00" rx="4.6" fill="#fff" stroke="#cdd5de" stroke-width="1.25"/></svg><span class="t" style="left:595.4px;top:579.6px;letter-spacing:0.15px">Last contacted mode</span><div class="car" style="left:821.7px;top:588.3px"></div><svg style="left:859px;top:564px" width="167" height="51" viewBox="859 564 167 51"><rect x="862.50" y="567.00" width="160.20" height="45.00" rx="4.6" fill="#fff" stroke="#cdd5de" stroke-width="1.25"/></svg><span class="t" style="left:877.4px;top:579.6px;letter-spacing:0.04px">is in</span><div class="car" style="left:997.3px;top:588.3px"></div><svg style="left:1034px;top:564px" width="664" height="52" viewBox="1034 564 664 52"><rect x="1037.50" y="567.00" width="656.60" height="45.90" rx="4.6" fill="#fff" stroke="#cdd5de" stroke-width="1.25"/></svg><div class="car" style="left:1669px;top:588.3px"></div><div class="tag" style="left:1052px;top:576.3px;width:98.5px"></div><span class="t" style="left:1058.4px;top:579.6px;letter-spacing:-0.37px">Replied</span><svg style="left:1131px;top:583.8px" width="11.4" height="11.4" viewBox="0 0 11.4 11.4" stroke="#2b2f33" stroke-width="1.4" stroke-linecap="round"><path d="M0.8 0.8L10.6 10.6M10.6 0.8L0.8 10.6"/></svg><div class="tag" style="left:1158px;top:576.3px;width:206.5px"></div><span class="t" style="left:1164.5px;top:579.6px;letter-spacing:-0.07px">Opened but No Reply</span><svg style="left:1344.7px;top:583.8px" width="11.4" height="11.4" viewBox="0 0 11.4 11.4" stroke="#2b2f33" stroke-width="1.4" stroke-linecap="round"><path d="M0.8 0.8L10.6 10.6M10.6 0.8L0.8 10.6"/></svg><svg style="left:1719.2px;top:579.8px" width="18" height="20" viewBox="0 0 18 20" fill="none" stroke="#71777d" stroke-width="1.4" stroke-linecap="round" stroke-linejoin="round"><path d="M0.8 4.4H17M2.6 4.4V16.6A2 2 0 0 0 4.6 18.6H13.2A2 2 0 0 0 15.2 16.6V4.4M5.6 4.2V2.6A1.8 1.8 0 0 1 7.4 0.8H10.4A1.8 1.8 0 0 1 12.2 2.6V4.2M7.1 8.6V14.4M10.9 8.6V14.4"/></svg>
<div class="hr" style="left:320.6px;top:648.8px;width:1447.2px"></div>
<div class="a" style="left:1025.4px;top:636.6px;width:37px;height:27px;border-radius:4.5px;background:#dae0e7"></div>
<span class="t" style="left:1025.4px;top:641.2px;width:37px;text-align:center;font-size:15.6px;letter-spacing:-0.6px">OR</span>
<svg style="left:338px;top:682px" width="231" height="51" viewBox="338 682 231 51"><rect x="341.50" y="685.00" width="224.20" height="45.00" rx="4.6" fill="#fff" stroke="#cdd5de" stroke-width="1.25"/></svg><span class="t" style="left:356px;top:697.6px;letter-spacing:0.17px">Contact</span><div class="car" style="left:540.5px;top:706.3px"></div><svg style="left:578px;top:682px" width="272" height="51" viewBox="578 682 272 51"><rect x="581.50" y="685.00" width="265.50" height="45.00" rx="4.6" fill="#fff" stroke="#cdd5de" stroke-width="1.25"/></svg><span class="t" style="left:595.4px;top:697.6px;letter-spacing:0.1px">Status</span><div class="car" style="left:821.7px;top:706.3px"></div><svg style="left:859px;top:682px" width="167" height="51" viewBox="859 682 167 51"><rect x="862.50" y="685.00" width="160.20" height="45.00" rx="4.6" fill="#fff" stroke="#cdd5de" stroke-width="1.25"/></svg><span class="t" style="left:877.4px;top:697.6px;letter-spacing:0.04px">is in</span><div class="car" style="left:997.3px;top:706.3px"></div><svg style="left:1034px;top:682px" width="664" height="52" viewBox="1034 682 664 52"><rect x="1037.50" y="685.00" width="656.60" height="45.90" rx="4.6" fill="#fff" stroke="#cdd5de" stroke-width="1.25"/></svg><div class="car" style="left:1669px;top:706.3px"></div><div class="tag" style="left:1052px;top:694.3px;width:75.5px"></div><span class="t" style="left:1058.4px;top:697.6px;letter-spacing:-0.49px">New</span><svg style="left:1107.8px;top:701.8px" width="11.4" height="11.4" viewBox="0 0 11.4 11.4" stroke="#2b2f33" stroke-width="1.4" stroke-linecap="round"><path d="M0.8 0.8L10.6 10.6M10.6 0.8L0.8 10.6"/></svg><div class="tag" style="left:1134.6px;top:694.3px;width:121.5px"></div><span class="t" style="left:1141.4px;top:697.6px;letter-spacing:0.09px">Contacted</span><svg style="left:1236.7px;top:701.8px" width="11.4" height="11.4" viewBox="0 0 11.4 11.4" stroke="#2b2f33" stroke-width="1.4" stroke-linecap="round"><path d="M0.8 0.8L10.6 10.6M10.6 0.8L0.8 10.6"/></svg><svg style="left:1719.2px;top:697.8px" width="18" height="20" viewBox="0 0 18 20" fill="none" stroke="#71777d" stroke-width="1.4" stroke-linecap="round" stroke-linejoin="round"><path d="M0.8 4.4H17M2.6 4.4V16.6A2 2 0 0 0 4.6 18.6H13.2A2 2 0 0 0 15.2 16.6V4.4M5.6 4.2V2.6A1.8 1.8 0 0 1 7.4 0.8H10.4A1.8 1.8 0 0 1 12.2 2.6V4.2M7.1 8.6V14.4M10.9 8.6V14.4"/></svg>
<div class="hr" style="left:320.6px;top:752.6px;width:1447.2px"></div>
<div class="circ" style="left:340.4px;top:777.4px;width:19.2px;height:19.2px;background:#3360c5"></div><svg style="left:344px;top:781px" width="12" height="12" viewBox="0 0 12 12" stroke="#dbe7fa" stroke-width="1.4" stroke-linecap="butt"><path d="M6 0.8V11.2M0.8 6H11.2"/></svg>
<span class="t blue" style="left:367.4px;top:778.1px;letter-spacing:0.1px">Add condition</span>
<!--ADDGROUP-->
<div class="a" style="left:1043.9px;top:823.6px;width:1.1px;height:56px;background:#cfd7df"></div>
<svg style="left:973px;top:876px" width="142" height="53" viewBox="973 876 142 53"><rect x="976.50" y="879.50" width="134.80" height="45.60" rx="4.8" fill="url(#gw)" stroke="#cdd5de" stroke-width="1.25"/></svg>
<div class="circ" style="left:990.4px;top:892.6px;width:19.2px;height:19.2px;background:#3360c5"></div><svg style="left:994px;top:896.2px" width="12" height="12" viewBox="0 0 12 12" stroke="#dbe7fa" stroke-width="1.4" stroke-linecap="butt"><path d="M6 0.8V11.2M0.8 6H11.2"/></svg>
<span class="t" style="left:1017.3px;top:892.3px;letter-spacing:-0.07px">Add group</span>
<!--ACTIONS-->
<span class="t" style="left:319.3px;top:972.6px;font-size:24.8px;line-height:28px;height:28px;margin-top:0.4px;color:#2e3033;letter-spacing:0.2px;-webkit-text-stroke:0.65px currentColor">What actions should be executed?</span>
<div class="card" style="left:319.6px;top:1022.2px;width:1449.2px;height:182.4px"></div>
<div class="circ" style="left:340.6px;top:1052.8px;width:27.4px;height:27.4px;background:#363636"></div>
<span class="t" style="left:340.9px;top:1057.4px;width:27.6px;text-align:center;color:#e9e9e9;font-size:15.5px">1</span><div class="a" style="left:350px;top:1070.4px;width:4px;height:2.2px;background:#363636"></div><div class="a" style="left:356.2px;top:1070.4px;width:4px;height:2.2px;background:#363636"></div>
<svg style="left:379px;top:1041px" width="334" height="52" viewBox="379 1041 334 52"><rect x="382.50" y="1044.30" width="327.50" height="45.00" rx="4.6" fill="#fff" stroke="#cdd5de" stroke-width="1.25"/></svg><span class="t" style="left:397.4px;top:1056.9px;letter-spacing:0.17px">Update contact</span><div class="car" style="left:685px;top:1065.5px"></div>
<svg style="left:722px;top:1041px" width="223" height="52" viewBox="722 1041 223 52"><rect x="725.00" y="1044.30" width="216.40" height="45.00" rx="4.6" fill="#fff" stroke="#cdd5de" stroke-width="1.25"/></svg><span class="t" style="left:739.6px;top:1056.9px;letter-spacing:0.1px">Status</span><div class="car" style="left:916.5px;top:1065.5px"></div>
<svg style="left:954px;top:1041px" width="238" height="52" viewBox="954 1041 238 52"><rect x="957.00" y="1044.30" width="231.60" height="45.00" rx="4.6" fill="#fff" stroke="#cdd5de" stroke-width="1.25"/></svg><span class="t" style="left:971px;top:1056.9px;letter-spacing:-0.26px">Fixed value</span><div class="car" style="left:1163px;top:1065.5px"></div>
<svg style="left:1200px;top:1041px" width="498" height="52" viewBox="1200 1041 498 52"><rect x="1203.50" y="1044.30" width="490.70" height="45.00" rx="4.6" fill="#fff" stroke="#cdd5de" stroke-width="1.25"/></svg><span class="t" style="left:1217.4px;top:1056.9px;letter-spacing:-0.24px">Responded</span><div class="car" style="left:1669px;top:1065.5px"></div><svg style="left:1638px;top:1062.8px" width="12.8" height="12.8" viewBox="0 0 12.8 12.8" stroke="#34363a" stroke-width="2.2" stroke-linecap="square"><path d="M1.5 1.5L11.3 11.3M11.3 1.5L1.5 11.3"/></svg><svg style="left:1719.2px;top:1057.3px" width="18" height="20" viewBox="0 0 18 20" fill="none" stroke="#71777d" stroke-width="1.4" stroke-linecap="round" stroke-linejoin="round"><path d="M0.8 4.4H17M2.6 4.4V16.6A2 2 0 0 0 4.6 18.6H13.2A2 2 0 0 0 15.2 16.6V4.4M5.6 4.2V2.6A1.8 1.8 0 0 1 7.4 0.8H10.4A1.8 1.8 0 0 1 12.2 2.6V4.2M7.1 8.6V14.4M10.9 8.6V14.4"/></svg>
<span class="t" style="left:1456.3px;top:1092.7px">Leave blank to set empty value</span>
<div class="hr" style="left:320.6px;top:1133.8px;width:1447.2px"></div>
<div class="circ" style="left:340.4px;top:1158.6000000000001px;width:19.2px;height:19.2px;background:#3360c5"></div><svg style="left:344px;top:1162.2px" width="12" height="12" viewBox="0 0 12 12" stroke="#dbe7fa" stroke-width="1.4" stroke-linecap="butt"><path d="M6 0.8V11.2M0.8 6H11.2"/></svg>
<span class="t blue" style="left:367.4px;top:1158.3px;letter-spacing:-0.02px">Add action</span>
<!--HELP-->
<div class="circ" style="left:1883.2px;top:1135.2px;width:49px;height:49px;background:#15354e;box-shadow:0 2px 7px rgba(40,50,60,.28)"></div>
<span class="t" style="left:1883.4px;top:1146.6px;width:49px;text-align:center;color:#fff;font-weight:400;-webkit-text-stroke:0.7px #fff;font-size:24.2px;line-height:28px;height:28px">?</span>
</div>
</body>
</html>
